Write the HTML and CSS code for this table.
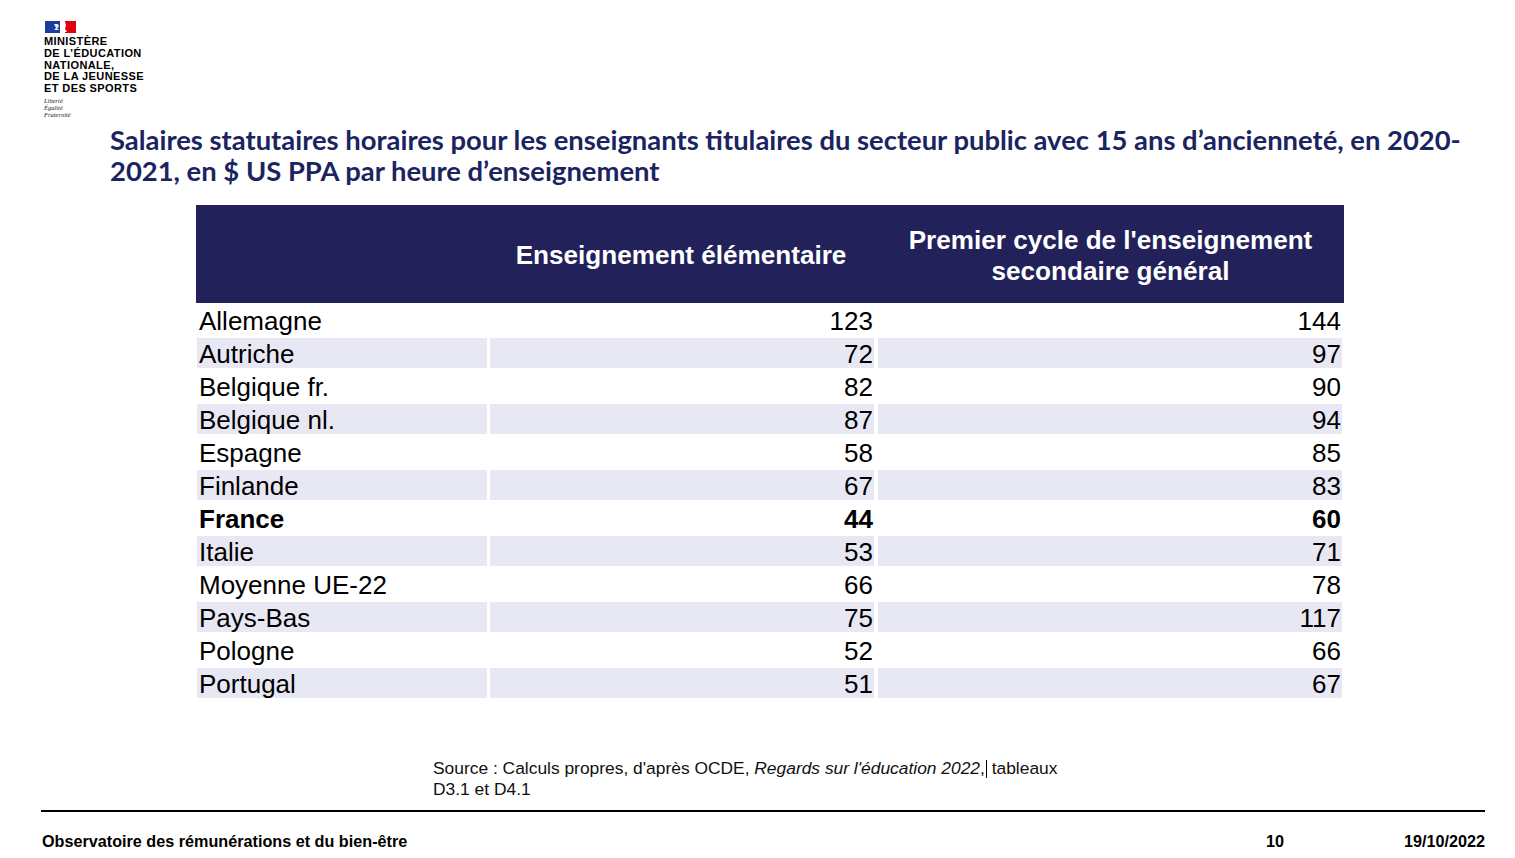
FILE: index.html
```html
<!DOCTYPE html>
<html lang="fr">
<head>
<meta charset="utf-8">
<title>Salaires statutaires horaires</title>
<link rel="stylesheet" href="styles.css">
</head>
<body>
<div class="page">
  <div class="logo">
    <svg class="flag" width="31" height="12" viewBox="0 0 31 12">
      <rect x="0" y="0" width="15" height="12" fill="#1d3d9b"/>
      <rect x="15" y="0" width="5" height="12" fill="#ffffff"/>
      <rect x="20" y="0" width="11" height="12" fill="#e1000f"/>
      <path d="M9 3 L13 3 L14 6 L12 7 L14 9 L9 9 L11 7 Z" fill="#ffffff" opacity="0.9"/>
      <path d="M18 2 L20 1 L21 4 L20 8 L22 11 L17 11 L19 7 Z" fill="#ffffff"/>
    </svg>
    <div class="ministry">MINISTÈRE<br>DE L’ÉDUCATION<br>NATIONALE,<br>DE LA JEUNESSE<br>ET DES SPORTS</div>
    <div class="motto">Liberté<br>Égalité<br>Fraternité</div>
  </div>

  <h1 class="title">Salaires statutaires horaires pour les enseignants titulaires du secteur public avec 15 ans d’ancienneté, en 2020-<br>2021, en $ US PPA par heure d’enseignement</h1>

  <div class="table">
    <div class="thead">
      <div class="th"></div>
      <div class="th">Enseignement élémentaire</div>
      <div class="th">Premier cycle de l'enseignement<br>secondaire général</div>
    </div>
    <div class="row"><div class="c">Allemagne</div><div class="c n">123</div><div class="c n">144</div></div>
    <div class="row alt"><div class="c">Autriche</div><div class="c n">72</div><div class="c n">97</div></div>
    <div class="row"><div class="c">Belgique fr.</div><div class="c n">82</div><div class="c n">90</div></div>
    <div class="row alt"><div class="c">Belgique nl.</div><div class="c n">87</div><div class="c n">94</div></div>
    <div class="row"><div class="c">Espagne</div><div class="c n">58</div><div class="c n">85</div></div>
    <div class="row alt"><div class="c">Finlande</div><div class="c n">67</div><div class="c n">83</div></div>
    <div class="row bold"><div class="c">France</div><div class="c n">44</div><div class="c n">60</div></div>
    <div class="row alt"><div class="c">Italie</div><div class="c n">53</div><div class="c n">71</div></div>
    <div class="row"><div class="c">Moyenne UE-22</div><div class="c n">66</div><div class="c n">78</div></div>
    <div class="row alt"><div class="c">Pays-Bas</div><div class="c n">75</div><div class="c n">117</div></div>
    <div class="row"><div class="c">Pologne</div><div class="c n">52</div><div class="c n">66</div></div>
    <div class="row alt"><div class="c">Portugal</div><div class="c n">51</div><div class="c n">67</div></div>
  </div>

  <p class="source">Source : Calculs propres, d'après OCDE, <em>Regards sur l'éducation 2022</em>,<span class="caret"></span> tableaux<br>D3.1 et D4.1</p>

  <footer class="footer">
    <span class="f-left">Observatoire des rémunérations et du bien-être</span>
    <span class="f-page">10</span>
    <span class="f-date">19/10/2022</span>
  </footer>
</div>
</body>
</html>
```

FILE: styles.css
```css
* { box-sizing: border-box; }
html, body { margin: 0; padding: 0; background: #ffffff; }
body { font-family: "Liberation Sans", Arial, sans-serif; color: #000; }

.page {
  width: 1515px;
  height: 858px;
  display: flex;
  flex-direction: column;
  overflow: hidden;
}

.logo {
  margin: 21px 0 0 44px;
  display: flex;
  flex-direction: column;
}
.flag { display: block; margin-left: 1px; }
.ministry {
  margin-top: 3px;
  font-family: "Liberation Sans", Arial, sans-serif;
  font-weight: 700;
  font-size: 11px;
  line-height: 11.8px;
  letter-spacing: 0.4px;
  color: #000;
}
.motto {
  margin-top: 2px;
  font-family: "Liberation Serif", serif;
  font-style: italic;
  font-size: 6.5px;
  line-height: 7px;
  color: #222;
}

.title {
  margin: 6px 0 0 110px;
  font-family: Lato, "Open Sans", sans-serif;
  font-weight: 700;
  font-size: 27.4px;
  line-height: 31px;
  color: #1b2461;
  white-space: nowrap;
}

.table {
  margin: 19px 0 0 196px;
  width: 1148px;
  font-family: "Liberation Sans", Arial, sans-serif;
}
.thead {
  height: 98px;
  padding-top: 4px;
  background: #22215a;
  display: grid;
  grid-template-columns: 290px 387px 471px;
  align-items: center;
  color: #ffffff;
  font-weight: 700;
  font-size: 26.1px;
  line-height: 31px;
}
.th { text-align: center; }
.th:nth-child(2) { padding-left: 3px; }
.th:nth-child(3) { padding-left: 4px; }

.row {
  margin-top: 3px;
  display: grid;
  grid-template-columns: 290px 384px 465px;
  grid-template-rows: 30px;
  column-gap: 3px;
  height: 30px;
  padding-left: 1px;
  font-size: 26px;
}
.thead + .row { margin-top: 2px; }
.row.alt .c { background: #e8e8f5; }
.row.bold { font-weight: 700; }
.c {
  height: 30px;
  padding: 2px 2px 0 2px;
  line-height: 28px;
  white-space: nowrap;
}
.c.n { text-align: right; padding-right: 1px; }
.c:nth-child(3) { margin-left: 1px; }

.source {
  margin: 60px 0 0 433px;
  font-size: 17.4px;
  line-height: 21px;
  color: #111;
}
.source em { font-style: italic; }
.caret {
  display: inline-block;
  width: 0;
  height: 18px;
  border-left: 1px solid #000;
  vertical-align: -4px;
  margin-left: 1px;
}

.footer {
  margin: auto 30px 0 41px;
  border-top: 2px solid #000;
  height: 48px;
  display: flex;
  align-items: center;
  padding-top: 12px;
  font-weight: 700;
  font-size: 16.2px;
  color: #000;
}
.f-left { margin-left: 1px; flex: 1; }
.f-page { margin-right: 120px; }
.f-date { margin-right: 0; }
```
